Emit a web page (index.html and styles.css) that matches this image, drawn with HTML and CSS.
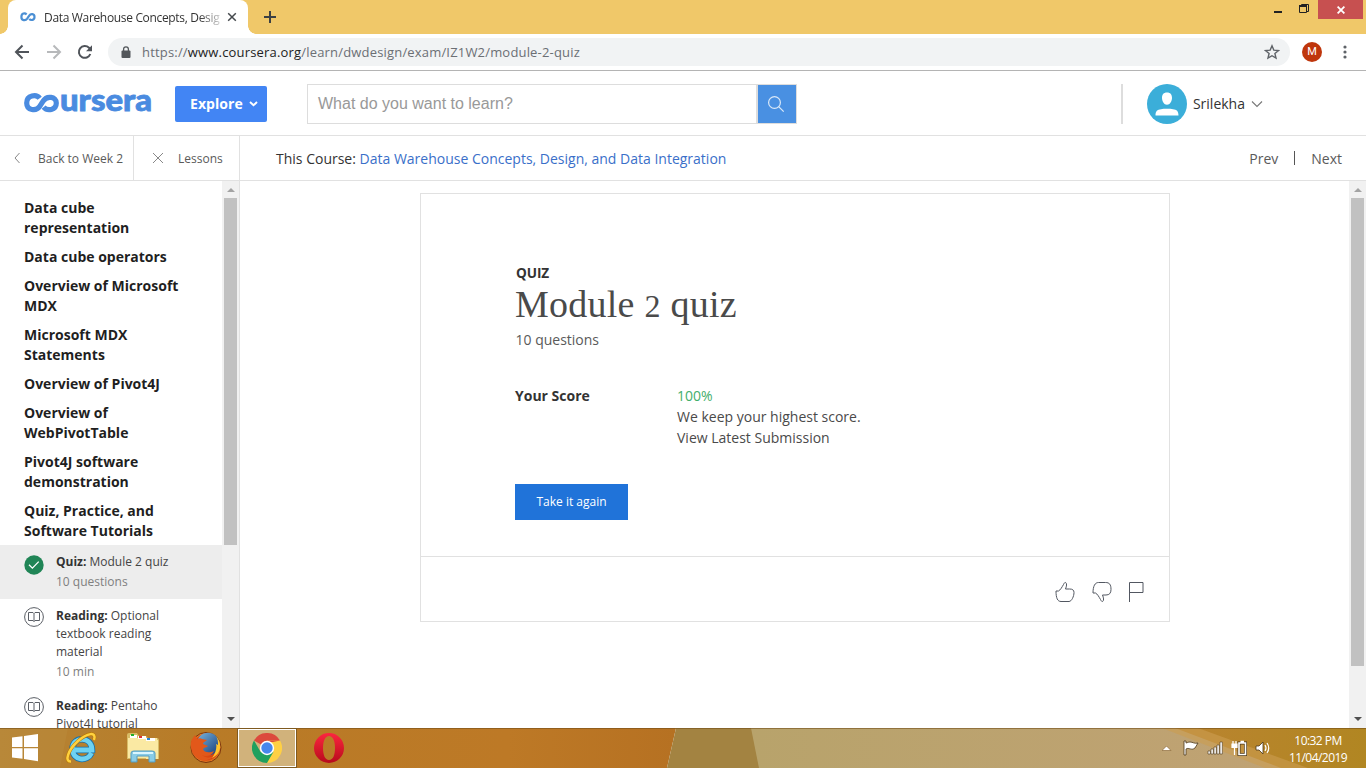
FILE: index.html
```html
<!DOCTYPE html>
<html lang="en">
<head>
<meta charset="utf-8">
<title>Data Warehouse Concepts, Design, and Data Integration</title>
<link rel="stylesheet" href="styles.css">
</head>
<body>
<div class="screen">
  <div class="tabstrip">
    <div class="tab">
      <svg class="favicon" width="16" height="10" viewBox="0 0 16 10"><path d="M6.6 2.4C5 .7 1.4 1 1.4 4.9s4.2 4 5.8 1.8l2-3C10.700 1.300 14.500 1.600 14.500 4.900s-3.800 3.900-5.200 2" fill="none" stroke="#4b8fd4" stroke-width="2.200"/></svg>
      <span class="tab-title">Data Warehouse Concepts, Desig</span>
      <svg width="10" height="10" viewBox="0 0 10 10"><path d="M1.200 1.200l7.600 7.600M8.800 1.200L1.200 8.800" stroke="#45494d" stroke-width="1.500"/></svg>
    </div>
    <svg class="newtab" width="12" height="12" viewBox="0 0 12 12"><path d="M6 0v12M0 6h12" stroke="#3c4043" stroke-width="2"/></svg>
    <div class="wincontrols">
      <svg width="48" height="20" viewBox="0 0 48 20"><path d="M4 11h8v2H4z" fill="#222"/><path d="M29.500 6.500h7v6h-7zM31.500 6V4.500h7v7H37" fill="none" stroke="#222" stroke-width="1"/><path d="M29 6h8" stroke="#222" stroke-width="2"/></svg>
      <div class="close"><svg width="8" height="8" viewBox="0 0 8 8"><path d="M.6.6l6.800 6.800M7.400.6L.6 7.400" stroke="#fff" stroke-width="1.800"/></svg></div>
    </div>
  </div>

  <div class="toolbar">
    <svg class="nav" width="80" height="20" viewBox="0 0 80 20" fill="none" stroke-width="2"><path d="M15 10H2M8.500 3.500L2 10l6.500 6.500" stroke="#50545a"/><path d="M33 10h13M39.500 3.500L46 10l-6.500 6.500" stroke="#b7b9bb"/><path d="M76.300 12a5.900 5.900 0 1 1-1.300-6.200l1.500 1.600" stroke="#50545a"/><path d="M78 3.300v6h-6z" fill="#50545a"/></svg>
    <div class="address">
      <svg width="10" height="13" viewBox="0 0 10 13"><rect x=".5" y="4.500" width="9" height="7.500" rx="1" fill="#53575b"/><path d="M2.600 5V3.300a2.400 2.400 0 0 1 4.800 0V5" fill="none" stroke="#53575b" stroke-width="1.300"/></svg>
      <span class="url">https://<b>www.coursera.org</b>/learn/dwdesign/exam/IZ1W2/module-2-quiz</span>
      <svg class="star" width="16" height="16" viewBox="0 0 16 16"><path d="M8 1.800l1.800 4.300 4.700.4-3.600 3 1.100 4.600L8 11.700l-4 2.400 1.100-4.600-3.600-3 4.700-.4z" fill="none" stroke="#5f6368" stroke-width="1.400"/></svg>
    </div>
    <span class="avatar-m">M</span>
    <svg class="kebab" width="4" height="14" viewBox="0 0 4 14" fill="#5f6368"><circle cx="2" cy="2" r="1.600"/><circle cx="2" cy="7" r="1.600"/><circle cx="2" cy="12" r="1.600"/></svg>
  </div>

  <header class="site">
    <svg class="logo" width="128" height="20" viewBox="0 0 128 20"><path d="M15.700 5.300C12.400.9 2.700 2.200 2.700 9.900c0 7.700 9.600 8.700 13 3.500l3.400-5.200c3.600-6 13.200-4.700 13.200 1.800 0 7.200-9 8.500-12.700 4.100" fill="none" stroke="#4a8be0" stroke-width="5.200"/><text class="logotext" x="36" y="18" textLength="92" lengthAdjust="spacingAndGlyphs">ursera</text></svg>
    <div class="explore">Explore <svg width="9" height="6" viewBox="0 0 9 6"><path d="M1 1l3.500 3.300L8 1" fill="none" stroke="#fff" stroke-width="1.900"/></svg></div>
    <div class="search"><span>What do you want to learn?</span><i><svg width="18" height="18" viewBox="0 0 18 18" fill="none" stroke="#d9e8f8" stroke-width="1.200"><circle cx="7.500" cy="7.500" r="5.900"/><path d="M11.700 11.700l5 5"/></svg></i></div>
    <div class="user">
      <svg width="40" height="40" viewBox="0 0 40 40"><circle cx="20" cy="20" r="20" fill="#3baed9"/><path d="M20 8.500c3.500 0 5 2.200 5 5.300 0 3.500-2 7-5 7s-5-3.500-5-7c0-3.100 1.500-5.300 5-5.300zM8.500 31.500c0-4.800 1.800-5.600 5.500-6.300 3-.6 9-.6 12 0 3.800.7 5.500 1.500 5.500 6.300z" fill="#fff"/></svg>
      <span>Srilekha</span>
      <svg width="12" height="8" viewBox="0 0 12 8"><path d="M1 1.500l5 5 5-5" fill="none" stroke="#777" stroke-width="1.100"/></svg>
    </div>
  </header>

  <nav class="subnav">
    <div class="back"><svg width="7" height="12" viewBox="0 0 7 12"><path d="M5.500 1l-4.500 5 4.500 5" fill="none" stroke="#888" stroke-width="1"/></svg><span>Back to Week 2</span></div>
    <div class="lessons"><svg width="12" height="12" viewBox="0 0 12 12"><path d="M1 1l10 10M11 1L1 11" stroke="#888" stroke-width="1"/></svg><span>Lessons</span></div>
    <div class="course">This Course: <a>Data Warehouse Concepts, Design, and Data Integration</a></div>
    <div class="prevnext"><span>Prev</span><i></i><span>Next</span></div>
  </nav>

  <main class="content">
    <aside class="side">
      <div class="side-list">
        <h3>Data cube<br>representation</h3>
        <h3>Data cube operators</h3>
        <h3>Overview of Microsoft<br>MDX</h3>
        <h3>Microsoft MDX<br>Statements</h3>
        <h3>Overview of Pivot4J</h3>
        <h3>Overview of<br>WebPivotTable</h3>
        <h3>Pivot4J software<br>demonstration</h3>
        <h3>Quiz, Practice, and<br>Software Tutorials</h3>
        <div class="item active">
          <svg width="20" height="20" viewBox="0 0 20 20"><circle cx="10" cy="10" r="9.700" fill="#208556"/><path d="M5 9.800l3.400 3.300 6.300-6.500" fill="none" stroke="#fff" stroke-width="1.300"/></svg>
          <div><p><b>Quiz:</b> Module 2 quiz</p><small>10 questions</small></div>
        </div>
        <div class="item">
          <svg width="20" height="20" viewBox="0 0 20 20" fill="none" stroke="#5b5f66"><circle cx="10" cy="10" r="9.400"/><path d="M10 6.500v8M10 6.500L9 5.500H4.500v8H9l1 1 1-1h4.500v-8H11z"/></svg>
          <div><p><b>Reading:</b> Optional<br>textbook reading<br>material</p><small>10 min</small></div>
        </div>
        <div class="item">
          <svg width="20" height="20" viewBox="0 0 20 20" fill="none" stroke="#5b5f66"><circle cx="10" cy="10" r="9.400"/><path d="M10 6.500v8M10 6.500L9 5.500H4.500v8H9l1 1 1-1h4.500v-8H11z"/></svg>
          <div><p><b>Reading:</b> Pentaho<br>Pivot4J tutorial</p></div>
        </div>
      </div>
      <div class="scroll side-scroll"><span class="up"></span><span class="thumb"></span><span class="down"></span></div>
    </aside>
    <section class="page">
      <article class="card">
        <div class="card-main">
          <div class="kicker">QUIZ</div>
          <h1>Module <span>2</span> quiz</h1>
          <div class="count">10 questions</div>
          <div class="score"><b>Your Score</b><div><em>100%</em><p class="keep">We keep your highest score.</p><p class="view">View Latest Submission</p></div></div>
          <div class="again">Take it again</div>
        </div>
        <footer class="card-foot">
          <svg width="20" height="22" viewBox="0 0 20 22"><path d="M1 10h2.500c2-1 3.500-4 5-6.500 1-2 1.500-2.300 2.300-1.800 1.200.8.900 3.300-.3 6.300h4c3 0 4.500 1 4.500 3.500 0 4-2.500 9-5 9H6C2.500 20.500 1 17 1 10z"/></svg>
          <svg width="20" height="22" viewBox="0 0 20 22"><path d="M1 12h2.500c2 1 3.500 4 5 6.500 1 2 1.500 2.300 2.300 1.800 1.200-.8.900-3.300-.3-6.300H14c3.500 0 5-2 5-5.500 0-5-1.500-7-5.500-7H6.500C3 1.500 1 5 1 12z"/></svg>
          <svg width="16" height="22" viewBox="0 0 16 22"><path d="M1.500 21V1.500h13.500v10H1.500"/></svg>
        </footer>
      </article>
    </section>
    <div class="scroll page-scroll"><span class="up"></span><span class="thumb"></span><span class="down"></span></div>
  </main>

  <div class="taskbar">
    <svg class="wall" width="1366" height="40" viewBox="0 0 1366 40" preserveAspectRatio="none">
      <defs><linearGradient id="l"><stop offset="0" stop-color="#b58435"/><stop offset=".3" stop-color="#b87b27"/><stop offset=".75" stop-color="#bd7926"/><stop offset="1" stop-color="#b67122"/></linearGradient><linearGradient id="r"><stop offset="0" stop-color="#b8a36b"/><stop offset="1" stop-color="#c1a275"/></linearGradient><linearGradient id="g"><stop offset="0" stop-color="#ba8430"/><stop offset="1" stop-color="#b18622"/></linearGradient></defs>
      <path d="M0 0h676l-9 40H0z" fill="url(#l)"/><path d="M0 0h68l-8 40H0z" fill="#bd9041" opacity=".35"/><path d="M676 0h76l8 40h-93z" fill="#a38341"/><path d="M751 0h615v40H759z" fill="url(#r)"/><path d="M1175 0h191v40h-85z" fill="url(#g)"/><path d="M1162 0h36l110 40h-43z" fill="#cb9c50" opacity=".6"/><path d="M0 .5h1366" stroke="#704b17" opacity=".55"/>
    </svg>
    <div class="apps">
      <svg width="30" height="34" viewBox="0 0 30 34" fill="#fff"><path d="M2 6.500l10.500-1.300V16H2zM14 5l14-2v13H14zM2 17.300h10.500v10.500L2 26.500zM14 17.300h14V30.200L14 28z"/></svg>
      <svg width="32" height="34" viewBox="0 0 32 34" fill="none"><path d="M26.500 22c-4 9-19 8-19-4.200C7.500 5 27 5 27 19H10" stroke="#176ea8" stroke-width="6.500"/><path d="M26.500 22c-4 9-19 8-19-4.200C7.500 5 27 5 27 19H10" stroke="#6ed2f2" stroke-width="4.800"/><path d="M6 30.500C-1 31 3 19 13 10 22 2 32 0 29 9" stroke="#b97806" stroke-width="3.600"/><path d="M6 30.500C-1 31 3 19 13 10 22 2 32 0 29 9" stroke="#ffd13e" stroke-width="2.500"/></svg>
      <svg width="34" height="34" viewBox="0 0 34 34"><path d="M1 4q0-2 2-2h8l2 3h7l2 2h9q2 0 2 3v18H1z" fill="#d8bc66"/><path d="M2 7h29v20H2zM20 9h12v19H20z" fill="#fae9a3"/><path d="M4 4h7v3H4z" fill="#fff"/><path d="M5 3h3v2H5z" fill="#20ae28"/><path d="M12 5h8v3h-8z" fill="#fff"/><path d="M13 5h3v2h-3z" fill="#d33"/><path d="M20 7h9v3h-9z" fill="#fff"/><path d="M21 7h3v2h-3z" fill="#2484d8"/><path d="M5 31V22q0-2 3-2h18q3 0 3 2v9h-6v-6H11v6z" fill="#89cce6" stroke="#559cc0"/><path d="M7 22h20" stroke="#d9f6ff" stroke-width="2"/></svg>
      <svg width="32" height="34" viewBox="0 0 32 34"><defs><radialGradient id="fx"><stop offset=".2" stop-color="#f06b17"/><stop offset=".8" stop-color="#cf390e"/><stop offset="1" stop-color="#ef9527"/></radialGradient><linearGradient id="fb" x2="1" y2="1"><stop stop-color="#7ab5dd"/><stop offset="1" stop-color="#143b78"/></linearGradient></defs><circle cx="16" cy="16.500" r="15" fill="url(#fx)" stroke="#79330e"/><circle cx="18" cy="13" r="11.200" fill="url(#fb)"/><path d="M1.500 9L5 4l2 4c2-1 4-1 5 0l5 1c-2 2-4 2-4 4l5 2c-2 2-4 1-5 3 1 4 7 4 11 2-2 5-8 6-12 4 3 3 8 3 12 1-5 6-15 6-20-1C1 20 0 14 1.500 9z" fill="#e2581a"/><path d="M26 5c7 8 5 18-4 22 4-5 5-11 4-14l2 1c0-3 0-6-2-9z" fill="#ffc52d"/></svg>
      <div class="running"><svg width="30" height="30" viewBox="0 0 30 30"><path d="M15 15L2 7.500A15 15 0 0 1 28 7.500z" fill="#dc4a3d"/><path d="M15 15V7.500h13A15 15 0 0 1 15 30z" fill="#ffd044"/><path d="M2 7.500A15 15 0 0 0 15 30l6.500-11.200H8.500z" fill="#20a05e"/><path d="M2 7.500h26L21 9H9z" fill="#dc4a3d"/><circle cx="15" cy="15" r="7.200" fill="#fff"/><circle cx="15" cy="15" r="5.700" fill="#4687ed"/></svg></div>
      <svg width="30" height="32" viewBox="0 0 30 32"><defs><linearGradient id="op" x2="0" y2="1"><stop stop-color="#fc263f"/><stop offset="1" stop-color="#b70b1b"/></linearGradient></defs><path fill-rule="evenodd" d="M15 1a15 15 0 1 1 0 30 15 15 0 0 1 0-30zm0 3c-4 0-6 5-6 12s2 12 6 12 6-5 6-12-2-12-6-12z" fill="url(#op)"/></svg>
    </div>
    <svg class="tray" width="112" height="20" viewBox="0 0 112 20"><path d="M0 12.500L4.500 8 9 12.500z" fill="#fff" stroke="#815b25" stroke-width=".6"/><path d="M22 3v14h2V11c3-2 5 2 9-1l3-5c-4 1-5-1-8-1-2 0-3 1-4 1V3z" fill="#fff" stroke="#4b3719" stroke-width=".8"/><path d="M46 13h2.300v3H46zM49 11h2.300v5H49zM52 9h2.300v7H52zM55 7h2.300v9H55zM58 4h2.300v12H58z" fill="#fff" stroke="#4b3719" stroke-width=".6"/><path d="M77 5h6.500v11.500H77z" fill="none" stroke="#4b3719" stroke-width="3"/><path d="M77 5h6.500v11.500H77zM78.500 3.500h3.500" fill="none" stroke="#fff" stroke-width="1.600"/><path d="M70 6h5v3.500h-5zM71 3v3M74 3v3M72.500 9v8" fill="#fff" stroke="#fff" stroke-width="1.200"/><path d="M94 8h3l4-4v12l-4-4h-3z" fill="#fff" stroke="#4b3719" stroke-width=".8"/><path d="M103 7q2 3 0 6M105 5q3.500 5 0 10" fill="none" stroke="#fff" stroke-width="1.200"/></svg>
    <div class="clock">10:32 PM<br>11/04/2019</div>
  </div>
</div>
</body>
</html>
```
FILE: styles.css
```css
* { box-sizing: border-box; }
body { margin: 0; overflow: hidden; font-family: "Open Sans", sans-serif; color: #333; }
h1, h3, p { margin: 0; }
svg { display: block; flex: none; }
i, em { font-style: normal; }
.screen { width: 1366px; height: 768px; display: flex; flex-direction: column; background: #fff; }

.tabstrip { height: 34px; flex: none; background: #f0c869; display: flex; align-items: flex-start; padding-left: 8px; }
.tab { width: 240px; height: 34px; background: #fff; border-radius: 8px 8px 0 0; display: flex; align-items: center; padding-left: 12px; position: relative; }
.tab::before, .tab::after { content: ""; position: absolute; bottom: 0; width: 8px; height: 8px; }
.tab::before { left: -8px; background: radial-gradient(circle at 0 0, #f0c869 7.5px, #fff 8px); }
.tab::after { right: -8px; background: radial-gradient(circle at 100% 0, #f0c869 7.5px, #fff 8px); }
.tab-title { font: 12px "Open Sans", sans-serif; letter-spacing: -.33px; width: 176px; margin: 0 7px 0 8px; white-space: nowrap; -webkit-mask-image: linear-gradient(90deg, #000 155px, transparent 182px); }
.newtab { margin: 11px 0 0 16px; }
.wincontrols { margin-left: auto; display: flex; padding-right: 3px; }
.close { width: 45px; height: 19px; background: #c75050; display: flex; align-items: center; justify-content: center; }

.toolbar { height: 37px; flex: none; border-bottom: 1px solid #b4b4b4; display: flex; align-items: center; padding-left: 14px; }
.address { width: 1182px; height: 28px; border-radius: 14px; margin-left: 14px; background: #f1f3f4; display: flex; align-items: center; padding: 0 10px 0 13px; }
.url { font-size: 13px; margin-left: 11px; color: #6b6f74; letter-spacing: .18px; white-space: nowrap; }
.url b { font-weight: 400; color: #222; }
.star { margin-left: auto; }
.avatar-m { width: 20px; height: 20px; margin-left: 12px; border-radius: 50%; background: #bf360c; color: #fff; font: 11px/20px Roboto, sans-serif; text-align: center; }
.kebab { margin-left: 21px; }

.site { height: 65px; flex: none; border-bottom: 1px solid #e1e1e1; display: flex; align-items: center; padding-left: 24px; }
.logo { overflow: visible; }
.logotext { font: 900 30px Lato, sans-serif; fill: #4a8be0; stroke: #4a8be0; stroke-width: .8px; }
.explore { width: 92px; height: 36px; margin: 1px 0 0 23px; background: #4285f4; border-radius: 2px; color: #fff; font-weight: 700; font-size: 14px; display: flex; align-items: center; padding-left: 15px; gap: 6px; letter-spacing: .05px; }
.search { width: 490px; height: 40px; margin: 1px 0 0 40px; border: 1px solid #ddd; display: flex; align-items: center; justify-content: space-between; padding-left: 10px; font: 16px "Liberation Sans", sans-serif; color: #999; }
.search i { width: 40px; height: 38px; background: #4990e2; border-left: 2px solid #ddd; display: flex; align-items: center; justify-content: center; padding-right: 2px; }
.user { margin: 1px 103px 0 auto; height: 40px; border-left: 2px solid #ddd; padding-left: 24px; display: flex; align-items: center; font-size: 14px; gap: 6px; }

.subnav { height: 45px; flex: none; border-bottom: 1px solid #e1e1e1; display: flex; align-items: center; font-size: 14px; }
.back, .lessons { height: 100%; display: flex; align-items: center; border-right: 1px solid #e1e1e1; font-size: 12px; color: #5a5a5a; white-space: nowrap; }
.back { width: 134px; padding-left: 14px; gap: 17px; }
.lessons { width: 106px; padding-left: 18px; gap: 14px; }
.course { margin-left: 36px; }
.course a { color: #3a6fc9; }
.prevnext { margin-left: auto; padding-right: 24px; display: flex; align-items: center; color: #5a5a5a; }
.prevnext i { width: 1px; height: 14px; background: #555; margin: 0 16px; }

.content { height: 547px; flex: none; display: flex; overflow: hidden; }
.side { width: 240px; border-right: 1px solid #e1e1e1; display: flex; }
.side-list { width: 222px; padding-top: 17px; overflow: hidden; }
.side-list h3 { font-size: 14px; line-height: 20px; font-weight: 700; margin: 0 0 9px 24px; color: #1f1f1f; white-space: nowrap; }
.item { display: flex; gap: 12px; padding: 8px 0 8px 24px; min-height: 54px; font-size: 12px; line-height: 18px; color: #444; white-space: nowrap; }
.item.active { margin-top: -5px; background: #ededed; }
.item.active > svg { margin-top: 2px; }
.item small { display: block; font-size: 12px; line-height: 18px; margin-top: 2px; color: #808080; }
.item b { font-weight: 700; color: #333; }
.scroll { background: #f1f1f1; display: flex; flex-direction: column; align-items: center; width: 17px; flex: none; height: 547px; }
.thumb { width: 13px; background: #c1c1c1; }
.up, .down { width: 0; height: 0; border: 4px solid transparent; flex: none; }
.up { border-top: 0; border-bottom-color: #a3a3a3; margin: 7px 0 6px; }
.down { border-bottom: 0; border-top-color: #505050; margin: auto 0 7px; }
.side-scroll .thumb { height: 347px; }
.page-scroll .thumb { height: 468px; }
.page { flex: 1; padding: 12px 0 0 180px; }
.card { width: 750px; height: 429px; border: 1px solid #e1e1e1; display: flex; flex-direction: column; }
.card-main { height: 363px; flex: none; border-bottom: 1px solid #e1e1e1; padding: 69px 0 0 94px; font-size: 14px; }
.kicker { font-weight: 700; font-size: 13.6px; line-height: 20px; padding-left: 1px; letter-spacing: -.1px; }
h1 { font: 400 38px/42px "Liberation Serif", serif; height: 42px; color: #4a4a4a; letter-spacing: .25px; white-space: nowrap; }
h1 span { font-size: 32px; }
.count { line-height: 20px; margin-top: 5px; padding-left: .5px; color: #5a5a5a; }
.score { display: flex; line-height: 21px; margin-top: 35px; }
.score b { width: 162px; font-weight: 700; }
.score em { display: block; color: #43ae6c; }
.score p { color: #4a4a4a; }
.again { width: 113px; height: 36px; margin-top: 36px; background: #2073d9; color: #fff; font-size: 12px; line-height: 36px; text-align: center; }
.card-foot { height: 64px; flex: none; display: flex; justify-content: flex-end; align-items: center; padding: 5px 25px 0 0; gap: 17px; }
.card-foot svg:nth-child(2) { margin-right: -1px; }
.card-foot path { fill: none; stroke: #525761; stroke-width: 1; }

.taskbar { height: 40px; flex: none; position: relative; display: flex; align-items: center; }
.wall { position: absolute; inset: 0; }
.apps, .tray, .clock { position: relative; }
.apps { display: flex; align-items: center; padding-left: 10px; }
.apps > :nth-child(2) { margin-left: 25px; }
.apps > :nth-child(3) { margin-left: 29px; }
.apps > :nth-child(4) { margin-left: 30px; }
.apps > :nth-child(5) { margin-left: 16px; }
.apps > :nth-child(6) { margin-left: 18px; }
.running { width: 58px; height: 38px; border: 1px solid #fff; outline: 1px solid #7f5a20; background: #d1b27b; display: flex; align-items: center; justify-content: center; }
.tray { margin-left: auto; margin-right: 14px; }
.clock { width: 60px; margin-right: 18px; text-align: center; color: #fff; font-size: 12px; line-height: 17px; letter-spacing: -.55px; white-space: nowrap; padding-top: 1px; }
```
